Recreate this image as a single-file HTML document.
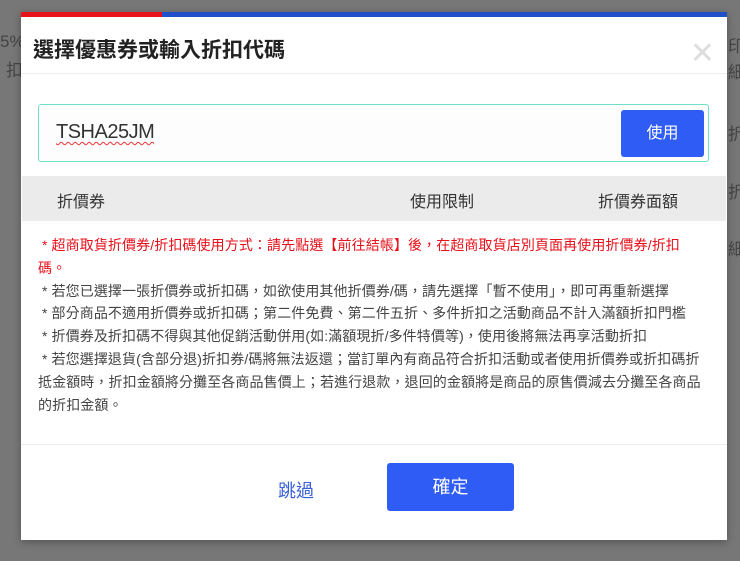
<!DOCTYPE html>
<html><head><meta charset="utf-8"><style>
body{margin:0;width:740px;height:561px;background:#777;position:relative;overflow:hidden;font-family:"Liberation Sans","Noto Sans CJK TC",sans-serif;}
.bgt{position:absolute;color:#444;font-size:17px}
.modal{position:absolute;left:21px;top:12px;width:706px;height:528px;background:#fff;box-shadow:0 2px 8px rgba(0,0,0,.3)}
.bar{position:absolute;top:0;left:0;height:5px;width:100%;background:#2050c8}
.bar i{position:absolute;left:0;top:0;height:5px;width:141px;background:#e8101a}
.title{position:absolute;left:12px;top:22px;font-size:21px;font-weight:bold;color:#222}
.close{position:absolute;right:12px;top:24px;font-size:30px;color:#ddd;font-weight:300}
.hr{position:absolute;left:0;width:100%;height:1px;background:#eee}
.input{position:absolute;left:17px;top:92px;width:669px;height:56px;border:1px solid #6fe0cc;border-radius:3px;background:#fdfdfd}
.input span{position:absolute;left:17px;top:16px;font-size:20px;color:#333;letter-spacing:-0.5px;text-decoration:underline wavy #e33;text-decoration-thickness:1px;text-underline-offset:3px}
.btn{position:absolute;background:#2f5cf5;color:#fff;border-radius:3px;text-align:center}
.th{position:absolute;left:1px;top:164px;width:704px;height:45px;background:#ebebeb;font-size:16px;color:#333}
.th span{position:absolute;top:12px}
.notes{position:absolute;left:17px;top:222px;width:690px;font-size:14px;letter-spacing:0.1px;line-height:22.8px;color:#444;white-space:nowrap}
.red{color:#e8101a}
</style></head><body>
<div class="bgt" style="left:0;top:32px">5%</div>
<div class="bgt" style="left:6px;top:56px">扣</div>
<div class="bgt" style="left:728px;top:32px">印</div>
<div class="bgt" style="left:728px;top:58px">細</div>
<div class="bgt" style="left:728px;top:120px">折</div>
<div class="bgt" style="left:728px;top:178px">折</div>
<div class="bgt" style="left:728px;top:235px">細</div>
<div class="modal">
<div class="bar"><i></i></div>
<div class="title">選擇優惠券或輸入折扣代碼</div>
<div class="close">✕</div>
<div class="hr" style="top:61px"></div>
<div class="input"><span>TSHA25JM</span><div class="btn" style="left:582px;top:5px;width:83px;height:47px;line-height:47px;font-size:16px">使用</div></div>
<div class="th"><span style="left:35px">折價券</span><span style="left:388px">使用限制</span><span style="left:576px">折價券面額</span></div>
<div class="notes">
<div class="red">&nbsp;* 超商取貨折價券/折扣碼使用方式：請先點選【前往結帳】後，在超商取貨店別頁面再使用折價券/折扣<br>碼。</div>
<div>&nbsp;* 若您已選擇一張折價券或折扣碼，如欲使用其他折價券/碼，請先選擇「暫不使用」，即可再重新選擇</div>
<div>&nbsp;* 部分商品不適用折價券或折扣碼；第二件免費、第二件五折、多件折扣之活動商品不計入滿額折扣門檻</div>
<div>&nbsp;* 折價券及折扣碼不得與其他促銷活動併用(如:滿額現折/多件特價等)，使用後將無法再享活動折扣</div>
<div>&nbsp;* 若您選擇退貨(含部分退)折扣券/碼將無法返還；當訂單內有商品符合折扣活動或者使用折價券或折扣碼折<br>抵金額時，折扣金額將分攤至各商品售價上；若進行退款，退回的金額將是商品的原售價減去分攤至各商品<br>的折扣金額。</div>
</div>
<div class="hr" style="top:432px"></div>
<div style="position:absolute;left:257px;top:465px;font-size:18px;color:#3a5fd8">跳過</div>
<div class="btn" style="left:366px;top:451px;width:127px;height:48px;line-height:48px;font-size:18px">確定</div>
</div>
</body></html>
